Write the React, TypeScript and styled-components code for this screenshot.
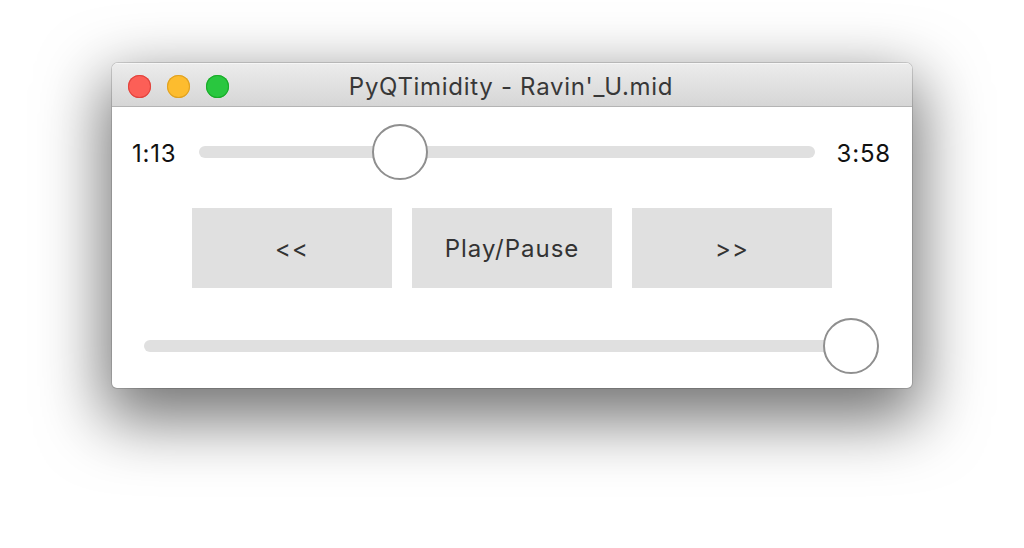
import React from "react";
import styled, { createGlobalStyle } from "styled-components";

const Global = createGlobalStyle`
  html, body { margin: 0; padding: 0; background: #ffffff; }
  body { font-family: Inter, "Liberation Sans", Arial, sans-serif; }
`;

const Page = styled.div`
  width: 1024px;
  height: 548px;
  box-sizing: border-box;
  padding: 63px 0 0 112px;
  background: #ffffff;
  overflow: hidden;
`;

const Window = styled.div`
  width: 800px;
  height: 325px;
  border-radius: 6px 6px 5px 5px;
  background: #ffffff;
  box-shadow: 0 0 0 1px rgba(0, 0, 0, 0.14), 0 24px 64px 8px rgba(0, 0, 0, 0.55);
  display: flex;
  flex-direction: column;
  overflow: hidden;
`;

const TitleBar = styled.div`
  height: 43px;
  flex: none;
  position: relative;
  display: flex;
  align-items: center;
  justify-content: center;
  background: linear-gradient(#ececec, #d6d6d6);
  border-bottom: 1px solid #b4b4b4;
  box-shadow: inset 0 1px 0 #f6f6f6;
`;

const Lights = styled.div`
  position: absolute;
  left: 16px;
  top: 12px;
  display: flex;
  gap: 16px;
`;

const Light = styled.div<{ $c: string; $b: string }>`
  width: 23px;
  height: 23px;
  border-radius: 50%;
  background: ${(p) => p.$c};
  box-shadow: inset 0 0 0 1px ${(p) => p.$b};
`;

const Title = styled.div`
  font-size: 24px;
  letter-spacing: 0.7px;
  color: #383838;
  margin: 3px 0 0 -2px;
`;

const Content = styled.div`
  flex: 1;
  display: flex;
  flex-direction: column;
  padding: 17px 0 0 0;
`;

const SeekRow = styled.div`
  display: flex;
  align-items: center;
  height: 56px;
  padding: 0 21px 0 20px;
`;

const TimeLabel = styled.div`
  font-size: 24px;
  letter-spacing: 0.8px;
  color: #111;
  white-space: nowrap;
  margin-top: 2px;
`;

const TrackWrap = styled.div<{ $ml: number; $mr: number }>`
  flex: 1;
  position: relative;
  height: 56px;
  display: flex;
  align-items: center;
  margin: 0 ${(p) => p.$mr}px 0 ${(p) => p.$ml}px;
`;

const Track = styled.div`
  width: 100%;
  height: 12px;
  border-radius: 6px;
  background: #e0e0e0;
`;

const Thumb = styled.div`
  position: absolute;
  top: 0;
  width: 52px;
  height: 52px;
  border-radius: 50%;
  background: #ffffff;
  border: 2px solid #8f8f8f;
`;

const Buttons = styled.div`
  display: flex;
  justify-content: center;
  gap: 20px;
  margin-top: 28px;
`;

const Button = styled.div`
  width: 200px;
  height: 80px;
  background: #e0e0e0;
  display: flex;
  align-items: center;
  justify-content: center;
  font-size: 24px;
  letter-spacing: 1px;
  color: #333;
`;

const VolumeRow = styled.div`
  display: flex;
  align-items: center;
  height: 56px;
  margin-top: 30px;
  padding: 0 33px 0 32px;
`;

function Slider({ value, ml = 0, mr = 0 }: { value: number; ml?: number; mr?: number }) {
  return (
    <TrackWrap $ml={ml} $mr={mr}>
      <Track />
      <Thumb style={{ left: `calc((100% - 56px) * ${value})` }} />
    </TrackWrap>
  );
}

export default function App() {
  return (
    <>
      <Global />
      <Page>
        <Window>
          <TitleBar>
            <Lights>
              <Light $c="#fc5f57" $b="#e0443e" />
              <Light $c="#fdbc2e" $b="#dea123" />
              <Light $c="#29c73f" $b="#1aab29" />
            </Lights>
            <Title>PyQTimidity - Ravin'_U.mid</Title>
          </TitleBar>
          <Content>
            <SeekRow>
              <TimeLabel>1:13</TimeLabel>
              <Slider value={0.309} ml={23} mr={22} />
              <TimeLabel>3:58</TimeLabel>
            </SeekRow>
            <Buttons>
              <Button>&lt;&lt;</Button>
              <Button>Play/Pause</Button>
              <Button>&gt;&gt;</Button>
            </Buttons>
            <VolumeRow>
              <Slider value={1} />
            </VolumeRow>
          </Content>
        </Window>
      </Page>
    </>
  );
}
